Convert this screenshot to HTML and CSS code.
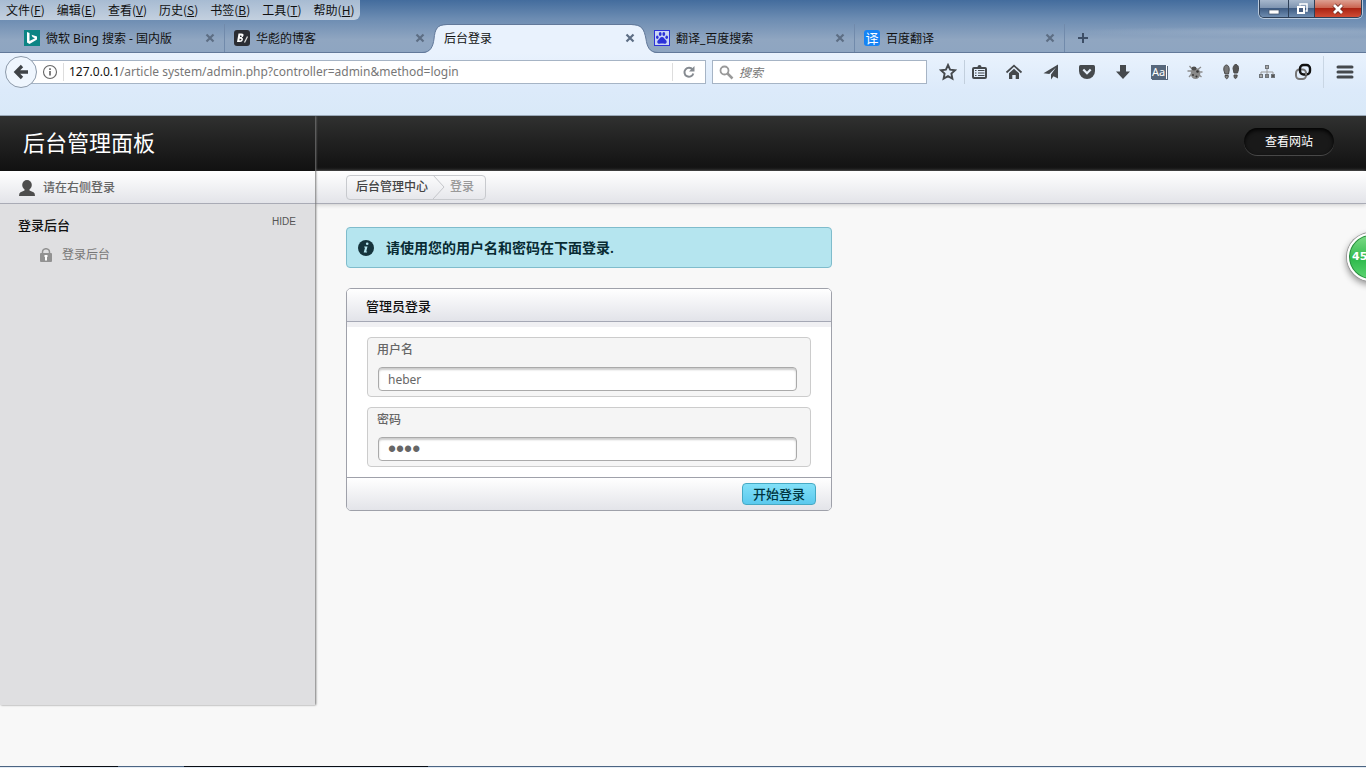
FILE: index.html
```html
<!DOCTYPE html>
<html lang="zh-CN">
<head>
<meta charset="utf-8">
<title>后台登录</title>
<link rel="stylesheet" href="styles.css">
</head>
<body>
<div class="window-top">
  <div class="title-row">
    <nav class="menu">
      <button type="button">文件(<u>F</u>)</button>
      <button type="button">编辑(<u>E</u>)</button>
      <button type="button">查看(<u>V</u>)</button>
      <button type="button">历史(<u>S</u>)</button>
      <button type="button">书签(<u>B</u>)</button>
      <button type="button">工具(<u>T</u>)</button>
      <button type="button">帮助(<u>H</u>)</button>
    </nav>
    <div class="window-buttons">
      <button type="button" class="min" aria-label="最小化"><svg width="14" height="14" viewBox="0 0 14 14"><rect x="2" y="8" width="10" height="4" fill="#fff" stroke="#3d4f68" stroke-width=".7"/></svg></button>
      <button type="button" class="restore" aria-label="还原"><svg width="14" height="14" viewBox="0 0 14 14"><path d="M5 3.500V2h7v7h-1.500" fill="none" stroke="#fff" stroke-width="1.500"/><rect x="3" y="5" width="6" height="6" fill="#4a5f80" stroke="#fff" stroke-width="2"/></svg></button>
      <button type="button" class="close" aria-label="关闭"><svg width="14" height="14" viewBox="0 0 14 14"><path d="M3 3l8 8M11 3l-8 8" stroke="#6b2a22" stroke-width="4.500"/><path d="M3 3l8 8M11 3l-8 8" stroke="#fff" stroke-width="2.800"/></svg></button>
    </div>
  </div>
  <div class="tabs">
    <div class="tab">
      <svg class="favicon" viewBox="0 0 16 16"><rect width="16" height="16" fill="#0c8484"/><path d="M3 2l2.500 1v8L11 8.200 8.500 7 7.500 4.700 13 6.600v3L5.500 14 3 12.500z" fill="#fff"/></svg>
      <span class="tab-title">微软 Bing 搜索 - 国内版</span>
      <button type="button" class="tab-close" aria-label="关闭标签页"><svg viewBox="0 0 10 10"><path d="M1.500 1.500l7 7M8.500 1.500l-7 7"/></svg></button>
    </div>
    <div class="tab plain">
      <svg class="favicon" viewBox="0 0 16 16"><rect width="16" height="16" rx="3" fill="#2b2d33"/><path d="M4.500 3.500h2.500q3-.2 2.500 2-.3 1.500-1.800 2 1.800.6 1.200 2.500-.6 2.200-3.400 2H3zM6 5.500v1.500q2 .2 1.800-.8Q7.800 5.300 6 5.500zM5.500 8.700v1.800q2 0 2-1 0-1-2-.8z" fill="#fff" fill-rule="evenodd"/><path d="M13.500 6.500l-3 6" stroke="#ddd" stroke-width="1.200"/></svg>
      <span class="tab-title">华彪的博客</span>
      <button type="button" class="tab-close" aria-label="关闭标签页"><svg viewBox="0 0 10 10"><path d="M1.500 1.500l7 7M8.500 1.500l-7 7"/></svg></button>
    </div>
    <div class="tab active">
      <svg class="tab-shape" viewBox="0 0 240 30" preserveAspectRatio="none"><path d="M0 30V29H2C11 29 13 22 14 15C15 5 17 1 27 1H211C222 1 224 5 226 15C227 22 229 29 238 29H240V30z" fill="#e9f2fd"/><path d="M0 28.500H2C11 28.500 13 22 14 15C15 5 17 .500 27 .500H211C222 .500 224 5 226 15C227 22 229 28.500 238 28.500H240" fill="none" stroke="#62799a"/></svg>
      <span class="tab-title">后台登录</span>
      <button type="button" class="tab-close" aria-label="关闭标签页"><svg viewBox="0 0 10 10"><path d="M1.500 1.500l7 7M8.500 1.500l-7 7"/></svg></button>
    </div>
    <div class="tab">
      <svg class="favicon" viewBox="0 0 16 16"><rect x=".5" y=".5" width="15" height="15" fill="#cbd6f5" stroke="#2c32d8"/><g fill="#2c32d8"><ellipse cx="3.300" cy="7.200" rx="1.300" ry="1.800"/><ellipse cx="6.200" cy="4" rx="1.400" ry="1.900"/><ellipse cx="9.800" cy="4" rx="1.400" ry="1.900"/><ellipse cx="12.700" cy="7.200" rx="1.300" ry="1.800"/><path d="M8 7c2 0 2.500 2 4 3.300 1.500 1.500.5 3.700-1.500 3.500-2-.3-3-.3-5 0-2 .2-3-2-1.500-3.500C5.500 9 6 7 8 7z"/></g></svg>
      <span class="tab-title">翻译_百度搜索</span>
      <button type="button" class="tab-close" aria-label="关闭标签页"><svg viewBox="0 0 10 10"><path d="M1.500 1.500l7 7M8.500 1.500l-7 7"/></svg></button>
    </div>
    <div class="tab">
      <span class="favicon translate">译</span>
      <span class="tab-title">百度翻译</span>
      <button type="button" class="tab-close" aria-label="关闭标签页"><svg viewBox="0 0 10 10"><path d="M1.500 1.500l7 7M8.500 1.500l-7 7"/></svg></button>
    </div>
    <button type="button" class="new-tab" aria-label="新建标签页"><svg width="12" height="12" viewBox="0 0 12 12"><path d="M6 1v10M1 6h10" stroke="#3d4e66" stroke-width="2"/></svg></button>
  </div>
</div>

<div class="toolbar">
  <div class="address">
    <button type="button" class="back" aria-label="后退"><svg width="18" height="18" viewBox="0 0 18 18"><path d="M10 3L4 9l6 6M4 9h12" fill="none" stroke="#3f4347" stroke-width="3.300"/></svg></button>
    <div class="url-box">
      <svg class="info" width="16" height="16" viewBox="0 0 16 16"><circle cx="8" cy="8" r="6.500" fill="none" stroke="#666" stroke-width="1.100"/><path d="M8 7v4.500M8 4.300v1.600" stroke="#555" stroke-width="1.500"/></svg>
      <span class="url"><b>127.0.0.1</b>/article system/admin.php?controller=admin&amp;method=login</span>
      <button type="button" class="reload" aria-label="刷新"><svg width="14" height="14" viewBox="0 0 14 14"><path d="M10.600 4.600A4.500 4.500 0 1 0 11.300 8.500" fill="none" stroke="#858a90" stroke-width="2"/><path d="M12.500 1v5.500H7z" fill="#858a90"/></svg></button>
    </div>
  </div>
  <div class="search">
    <svg width="15" height="15" viewBox="0 0 15 15"><circle cx="5.500" cy="5.500" r="4" fill="none" stroke="#999" stroke-width="1.800"/><path d="M8.500 8.500l5 5" stroke="#999" stroke-width="2.500"/></svg>
    <input type="text" placeholder="搜索" aria-label="搜索">
  </div>
  <div class="tools">
    <button type="button" class="star" aria-label="收藏"><svg viewBox="0 0 18 18"><path d="M9 2l2.100 4.600 5 .6-3.700 3.400 1 5L9 13.100l-4.400 2.500 1-5L1.900 7.200l5-.6z" fill="none" stroke="#45494d" stroke-width="1.900"/></svg></button>
    <button type="button" aria-label="书签"><svg viewBox="0 0 18 18"><path d="M5 4h1.500a2 2 0 0 1 4 0H12v2H5z" fill="#45494d"/><rect x="2" y="5" width="13" height="10" rx="1" fill="none" stroke="#45494d" stroke-width="2"/><path d="M4 7.500h1.500M7 7.500h6.500M4 10h1.500M7 10h6.500M4 12.500h1.500M7 12.500h6.500" stroke="#45494d" stroke-width="1.200"/></svg></button>
    <button type="button" aria-label="主页"><svg viewBox="0 0 18 18"><path d="M9 5.800l5 4.500V16h-3.300v-4H7.300v4H4v-5.700z" fill="#45494d"/><path d="M1.500 9.500L9 2.700l7.500 6.800" fill="none" stroke="#45494d" stroke-width="1.700"/></svg></button>
    <button type="button" aria-label="发送"><svg viewBox="0 0 18 18"><path d="M16 1.500v14l-4.500-2.200L9 16.500v-5L14 4.500 7.300 11 1.500 10.300z" fill="#45494d"/></svg></button>
    <button type="button" aria-label="Pocket"><svg viewBox="0 0 18 18"><path d="M2.500 2h13q1.500 0 1.500 1.500V8a8 8 0 0 1-16 0V3.500Q1 2 2.500 2z" fill="#45494d"/><path d="M5.300 6.500L9 10.200l3.700-3.700" fill="none" stroke="#e6effa" stroke-width="2.200"/></svg></button>
    <button type="button" aria-label="下载"><svg viewBox="0 0 18 18"><path d="M6 2h6v6.500h4L9 16 2 8.500h4z" fill="#45494d"/></svg></button>
    <button type="button" aria-label="字典" class="dict"><span>Aa</span></button>
    <button type="button" aria-label="调试"><svg viewBox="0 0 18 18"><path d="M3.500 3l3.500 4M15 4l-4 3M1.500 8h5M12 9h4.500M3 14l3.500-4M15.500 14L12 11" stroke="#8c8c8c" stroke-width="1.300"/><ellipse cx="9.500" cy="10.500" rx="4.800" ry="5.500" fill="#8a8a8a"/><ellipse cx="8" cy="5.500" rx="2.500" ry="2" fill="#4e4e4e"/><g fill="#333"><circle cx="11.500" cy="8.500" r="1.300"/><circle cx="7" cy="12" r=".9"/><circle cx="10.500" cy="13.500" r="1"/></g></svg></button>
    <button type="button" aria-label="脚印"><svg viewBox="0 0 18 18"><g stroke="#4a4a4a"><path d="M1.800 7c-.5-6.700 5.700-6.700 5.400 0l-.7 4H3z" fill="#777"/><path d="M3 12.500h3.300l-.2 2q-1.400 2.500-2.800 0z" fill="#888"/><path d="M11 5.500c.5-6 6.200-5 5.500 1l-1 3.500h-3.500z" fill="#555"/><path d="M12 12h3.200l-.4 2.500q-1.500 2-2.600 0z" fill="#666"/></g></svg></button>
    <button type="button" aria-label="站点结构"><svg viewBox="0 0 18 18"><path d="M9 6v7M3 12V9h12v3" fill="none" stroke="#999"/><g fill="#aaa" stroke="#70757a"><rect x="7.500" y="2.500" width="3" height="3"/><rect x="1.500" y="11.500" width="3" height="3"/><rect x="7.500" y="11.500" width="3" height="3" fill="#888"/><rect x="13.500" y="11.500" width="3" height="3" fill="#555"/></g></svg></button>
    <button type="button" aria-label="链接"><svg viewBox="0 0 18 18"><rect x="2" y="6.500" width="10" height="9.500" rx="3.500" fill="none" stroke="#777" stroke-width="2"/><rect x="6" y="2" width="10" height="9.500" rx="3.500" fill="none" stroke="#111" stroke-width="2.400"/><path d="M12 9v3.500" fill="none" stroke="#777" stroke-width="2"/></svg></button>
    <button type="button" class="hamburger" aria-label="菜单"><svg viewBox="0 0 18 18"><path d="M2 4h14M2 9h14M2 14h14" stroke="#45494d" stroke-width="3" stroke-linecap="round"/></svg></button>
  </div>
</div>

<div class="page">
  <aside class="sidebar">
    <header class="brand"><h1>后台管理面板</h1></header>
    <div class="user">
      <svg width="16" height="16" viewBox="0 0 16 16"><ellipse cx="8" cy="5" rx="4.800" ry="5" fill="#4d4d4d"/><path d="M5.500 9h5v1.500l4 1.800Q16 13 16 16H0q0-3 1.500-3.700l4-1.800z" fill="#4d4d4d"/></svg>
      <span>请在右侧登录</span>
    </div>
    <nav class="side-nav">
      <div class="side-title"><h2>登录后台</h2><a href="#">HIDE</a></div>
      <a href="#" class="side-link"><svg width="12" height="14" viewBox="0 0 12 14"><path d="M2.500 6V4a3.500 3.300 0 0 1 7 0v2" fill="none" stroke="#929292" stroke-width="1.500"/><rect y="5" width="12" height="9" rx="1" fill="#929292"/><path d="M4.500 7h3v2H7v3.500H5V9h-.5z" fill="#fff"/></svg>登录后台</a>
    </nav>
  </aside>
  <main class="main">
    <header class="top"><a href="#" class="view-site">查看网站</a></header>
    <div class="crumb-bar">
      <div class="crumbs">
        <a href="#">后台管理中心</a>
        <svg width="12" height="24" viewBox="0 0 12 24"><path d="M0 0l11 12L0 24" fill="none" stroke="#c4c6ca"/></svg>
        <span>登录</span>
      </div>
    </div>
    <div class="content">
      <p class="notice"><svg width="16" height="16" viewBox="0 0 16 16"><circle cx="8" cy="8" r="8" fill="#15333b"/><circle cx="9.200" cy="3.800" r="1.300" fill="#b5e5ef"/><path d="M6.300 6.500h3.200l-1.300 5h1l-.3 1H5.700l1.400-5h-1z" fill="#b5e5ef"/></svg>请使用您的用户名和密码在下面登录.</p>
      <form class="panel">
        <h3>管理员登录</h3>
        <div class="fields">
          <div class="field"><label for="user">用户名</label><input id="user" type="text" value="heber"></div>
          <div class="field"><label for="pass">密码</label><input id="pass" type="password" value="1234"></div>
        </div>
        <div class="panel-foot"><button type="submit">开始登录</button></div>
      </form>
    </div>
  </main>
  <div class="badge">45</div>
</div>
<div class="taskbar"><i class="one"></i><i class="four"></i></div>
</body>
</html>
```
FILE: styles.css
```css
* { box-sizing: border-box; }
body {
  margin: 0;
  min-height: 100vh;
  display: flex;
  flex-direction: column;
  overflow: hidden;
  background: #f8f8f8;
  color: #666;
  font: 12px/18px "Noto Sans", "Noto Sans CJK SC", sans-serif;
}
button, input { font: inherit; color: inherit; margin: 0; padding: 0; border: 0; background: none; }
button { display: flex; align-items: center; justify-content: center; flex-shrink: 0; }
svg { display: block; flex-shrink: 0; }
a { color: inherit; text-decoration: none; }
h1, h2, h3, p { margin: 0; }

.window-top {
  height: 53px;
  display: flex;
  flex-direction: column;
  justify-content: space-between;
  background: radial-gradient(ellipse at 94% 60%, #9fb2c9aa, transparent 12%), linear-gradient(#436c9d, #6c8cb2 35%, #90a6c1 75%, #8ea5c1);
  color: #111;
}
.title-row { display: flex; justify-content: space-between; align-items: flex-start; }
.menu {
  display: flex;
  gap: 12px;
  height: 20px;
  padding: 0 6px;
  border-radius: 0 0 6px 0;
  background: linear-gradient(#a7bbd2, #c3d0df);
  font-family: "Noto Sans CJK SC", sans-serif;
}
.window-buttons {
  display: flex;
  height: 18px;
  margin-right: 4px;
  border: 1px solid #2e4058;
  border-top: 0;
  border-radius: 0 0 5px 5px;
  overflow: hidden;
  box-shadow: 0 0 0 1px #b9c9dc;
}
.min, .restore { background: linear-gradient(#a6b7cc, #8096b2 45%, #405d84 50%, #6e8cb0); border-right: 1px solid #2e4058; }
.min { width: 29px; }
.restore { width: 26px; }
.close { width: 46px; background: linear-gradient(#dda092, #cb6652 45%, #ab2413 50%, #d04c35); }

.tabs { display: flex; height: 29px; padding-left: 15px; border-bottom: 1px solid #62799a; }
.tab {
  position: relative;
  flex: 0 1 210px;
  display: flex;
  align-items: center;
  gap: 6px;
  padding: 0 9px;
  border-right: 1px solid #718aab;
}
.tab.plain, .tab.active { border-right-color: transparent; }
.tab-title { flex: 1; padding-top: 2px; white-space: nowrap; position: relative; }
.favicon { width: 16px; height: 16px; }
.translate { border-radius: 3px; background: #1583f5; color: #fff; font-size: 13px; line-height: 16px; text-align: center; }
.tab-shape { position: absolute; left: -15px; top: 0; width: 240px; height: 30px; z-index: 1; }
.active .tab-title, .active .tab-close { z-index: 2; }
.tab-close { position: relative; width: 10px; height: 10px; }
.tab-close svg { width: 10px; height: 10px; fill: none; stroke: #5d6e84; stroke-width: 2.2; }
.new-tab { width: 36px; }

.toolbar {
  display: flex;
  align-items: flex-start;
  height: 63px;
  padding: 3px 9px 0 5px;
  border-bottom: 1px solid #9aa9b8;
  background: linear-gradient(#e9f2fd, #dceafa 60%, #d9e9f8);
}
.address { flex: 1; display: flex; align-items: center; height: 32px; }
.back {
  position: relative;
  z-index: 1;
  width: 32px;
  height: 32px;
  border: 1px solid #8d9aaa;
  border-radius: 50%;
  background: #eff6fe;
}
.url-box { flex: 1; display: flex; align-items: center; height: 24px; margin-left: -6px; padding-left: 10px; border: 1px solid #a6b4c5; background: #fff; }
.url { flex: 1; margin-left: 5px; padding-left: 5px; border-left: 1px solid #ddd; color: #777; white-space: nowrap; }
.url b { font-weight: 400; color: #111; }
.reload { width: 33px; height: 18px; border-left: 1px solid #ddd; }
.search { display: flex; align-items: center; gap: 5px; flex: 0 1 215px; height: 24px; margin: 4px 12px 0 6px; padding-left: 6px; border: 1px solid #a6b4c5; background: #fff; }
.search input { flex: 1; min-width: 0; outline: 0; font-family: "Noto Sans CJK SC", sans-serif; }
.search input::placeholder { color: #777; font-style: italic; }
.tools { display: flex; align-items: center; height: 32px; }
.tools button { width: 36px; height: 24px; }
.tools svg { width: 18px; height: 18px; }
.tools .star { width: 26px; justify-content: flex-start; border-right: 1px solid #c2cfdd; }
.tools .star + button { width: 30px; }
.tools .star + button + button { width: 38px; }
.tools .hamburger { width: 34px; height: 32px; padding-left: 8px; margin-left: 2px; border-left: 1px solid #c9d6e4; }
.dict span { width: 16px; height: 14px; border-right: 1px solid #fff; box-shadow: 1px 1px 0 #56677c; background: #56677c; color: #fff; font-size: 11px; line-height: 14px; }

.page { flex: 1; display: flex; position: relative; overflow: hidden; }
.sidebar { width: 315px; margin-bottom: 61px; background: #dfdfe1; box-shadow: 1px 0 2px #777; z-index: 1; }
.brand, .top { height: 55px; display: flex; align-items: center; background: linear-gradient(#303130, #202020 50%, #111); }
.brand { padding: 0 0 4px 23px; }
h1 { font-weight: 400; font-size: 22px; line-height: 32px; color: #fff; }
.user, .crumb-bar { height: 33px; display: flex; align-items: center; border-bottom: 1px solid #a9abb5; background: linear-gradient(#fff, #e3e4e9); }
.user { gap: 8px; padding: 2px 0 0 19px; font-weight: 500; }
.side-nav { padding: 12px 19px 0 18px; }
.side-title { display: flex; justify-content: space-between; }
.side-title a { font: 10px/12px "Liberation Sans", sans-serif; color: #555; }
h2, h3 { font-size: 13px; line-height: 18px; font-weight: 500; color: #111; }
.side-link { display: flex; align-items: center; gap: 10px; margin: 12px 0 0 22px; color: #777; }
.main { flex: 1; min-width: 0; }
.top { justify-content: flex-end; padding-right: 32px; }
.view-site { margin-bottom: 4px; padding: 5px 21px 4px; border-radius: 14px; background: #191919; box-shadow: inset 0 2px 4px #000, 0 1px 0 #484848; color: #fff; }
.crumb-bar { padding-left: 31px; box-shadow: 0 1px 4px #ccc; }
.crumbs { display: flex; align-items: center; height: 25px; padding: 0 11px 0 9px; border: 1px solid #c8cace; border-radius: 4px; color: #999; font-weight: 500; }
.crumbs a { color: #444; }
.crumbs svg { margin: 0 5px; }
.content { display: grid; grid-template-columns: 1fr 1fr; gap: 20px 28px; padding: 23px 20px 0 31px; }
.content > * { grid-column: 1; }
.notice { display: flex; align-items: center; gap: 12px; height: 41px; padding-left: 11px; border: 1px solid #7fbccc; border-radius: 4px; background: #b5e5ef; color: #082b33; font-size: 14px; font-weight: 600; }
.panel { border: 1px solid #9fa1aa; border-radius: 5px; overflow: hidden; background: #fff; }
h3 { height: 33px; padding: 8px 19px 0; border-bottom: 1px solid #a5a8b5; background: linear-gradient(#fff, #e2e3e9); box-shadow: 0 5px 0 #f0f0f3; }
.fields { display: flex; flex-direction: column; gap: 10px; padding: 15px 20px 10px; }
.field { display: flex; flex-direction: column; gap: 8px; height: 60px; padding: 3px 13px 0 10px; border: 1px solid #ccc; border-radius: 4px; background: #f5f5f5; }
.field label { margin-left: -1px; font-weight: 500; }
.field input { height: 24px; padding: 0 9px; border: 1px solid #aaa; border-radius: 4px; background: #fff; box-shadow: inset 0 2px 2px #ccc; outline: 0; }
.field input[type="password"] { font: 23px/22px "Liberation Sans", sans-serif; }
.panel-foot { display: flex; justify-content: flex-end; align-items: center; height: 33px; padding-right: 15px; border-top: 1px solid #9fa1aa; background: linear-gradient(#fff, #e3e4e9); }
.panel-foot button { width: 74px; height: 22px; border: 1px solid #46a9c4; border-radius: 4px; background: linear-gradient(#82e0f8, #5bc9ee); color: #003540; font-size: 13px; font-weight: 500; }
.badge { position: absolute; z-index: 2; right: -29px; top: 117px; width: 48px; height: 48px; padding-left: 3px; border: 2px solid #fff; border-radius: 50%; background: linear-gradient(#80dc88, #2fba4c 55%, #5dd572); box-shadow: 0 0 0 1px #999, 0 3px 6px 1px #999, inset 0 0 0 1px #2c8b42; color: #fff; font: bold 11px/43px "DejaVu Sans", sans-serif; }
.taskbar { display: flex; height: 2px; padding-left: 60px; gap: 66px; border-top: 1px solid #4b6482; background: #e4ebf3; }
.taskbar i { height: 1px; margin-top: -1px; background: #080d14; }
.one { width: 58px; }
.four { width: 244px; }
```
